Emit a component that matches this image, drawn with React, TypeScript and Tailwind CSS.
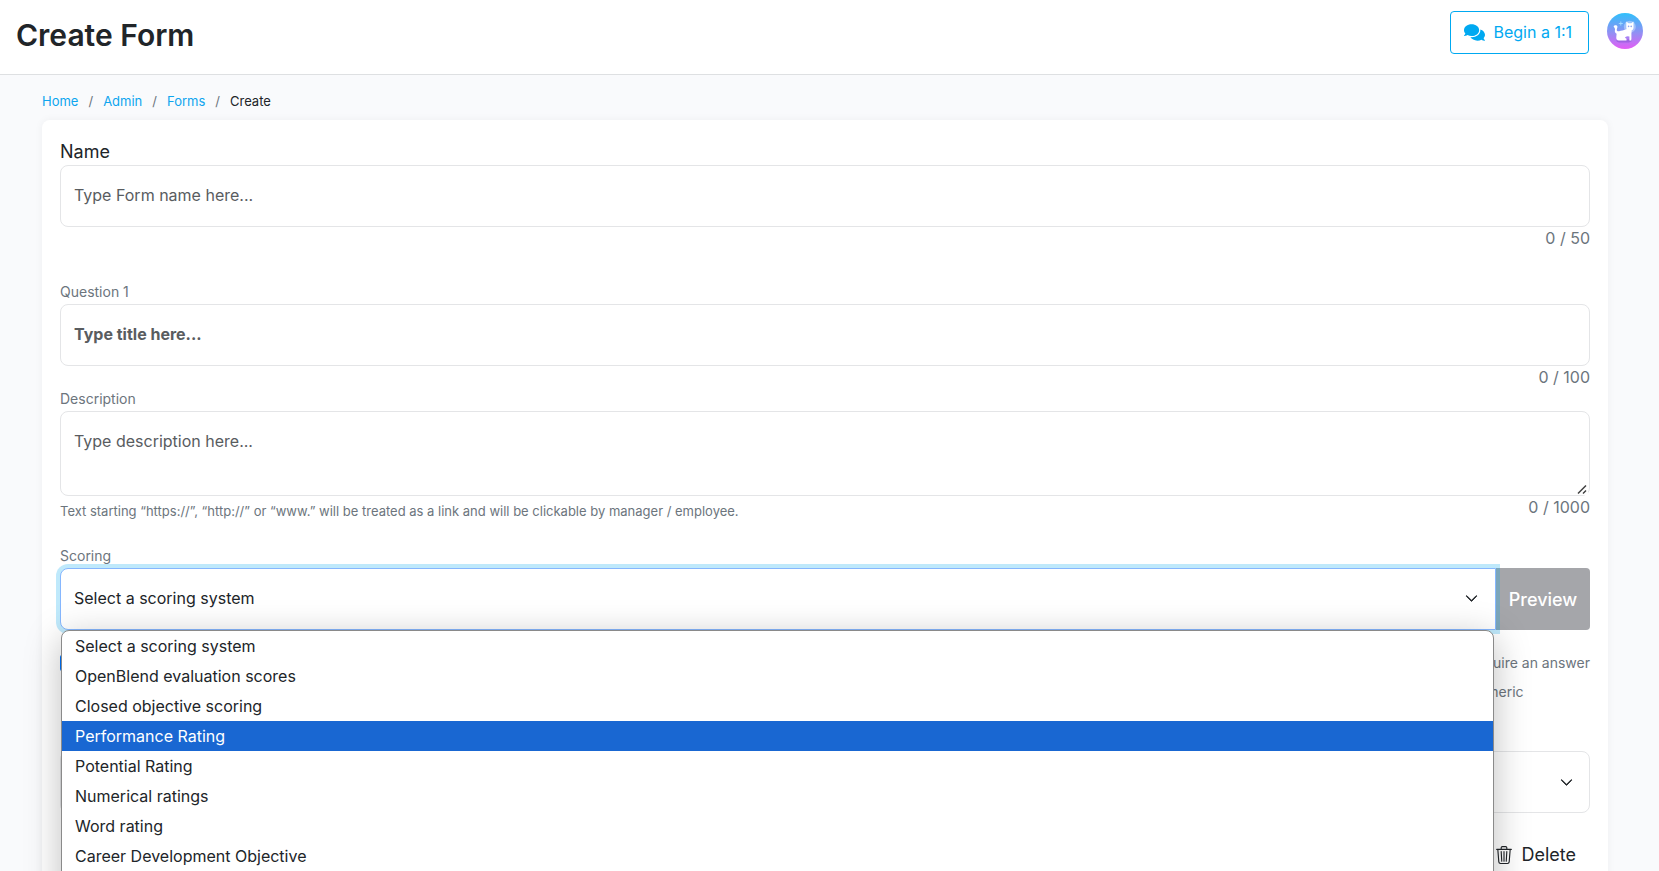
import { useState } from "react";
import { FaComments } from "react-icons/fa";
import { BsChevronDown, BsTrash3 } from "react-icons/bs";

const scoringOptions = [
  "Select a scoring system",
  "OpenBlend evaluation scores",
  "Closed objective scoring",
  "Performance Rating",
  "Potential Rating",
  "Numerical ratings",
  "Word rating",
  "Career Development Objective",
];

const crumbs = ["Home", "Admin", "Forms"];

const labelClass = "block pb-[2px] text-sm leading-[21px] text-[#6c757d]";
const fieldClass =
  "block w-full rounded-lg border border-[#e4e5e7] bg-white px-[13px] text-base text-[#212529] outline-none placeholder:text-[#595c5f]";
const counterClass = "text-right text-base leading-[22px] text-[#6c757d]";

const Avatar = () => (
  <svg viewBox="0 0 36 36" className="size-9" aria-hidden="true">
    <defs>
      <linearGradient id="avatar-bg" x1="0" y1="0" x2="0" y2="1">
        <stop offset="0" stopColor="#2fc0fb" />
        <stop offset="0.55" stopColor="#9190f3" />
        <stop offset="1" stopColor="#e35cf5" />
      </linearGradient>
    </defs>
    <circle cx="18" cy="18" r="18" fill="url(#avatar-bg)" />
    <path
      d="M9 27.5c1 2 3 2 5 2h8l3-1.500v-2z"
      fill="#6a45c0"
      opacity="0.35"
    />
    <circle cx="22.800" cy="13.800" r="6" fill="#c9dcff" opacity="0.55" />
    <path
      d="M6.600 13.200c.8-1.400 3.400-1.500 3.800.1.300 1.400-.9 2.700-.6 4 .2 1 1.300 1.300 2.400.9 2-.8 4.600-.6 6.300-1.700l1.500-.5 4.300.6c.7 1.500 0 3.400.1 5v5.900h-2v-4l-1.900-.3c-1.300.2-2 .8-2.600 1.500l1.600 1v1.800h-7.500c-2 0-3-1.200-2.700-3.200l.3-3.500c-1.700-1-2.100-2.400-1.600-4 .3-1.100-.8-2.300-1.400-3.600z"
      fill="#fff"
    />
    <path
      d="M19.300 8.500l2.200 1.700h2.800l2.200-1.700v6.300c0 2-1.600 3-3.600 3s-3.600-1-3.600-3z"
      fill="#fff"
    />
    <circle cx="21.600" cy="13.400" r="0.800" fill="#8fa5f0" />
    <circle cx="24.200" cy="13.400" r="0.800" fill="#8fa5f0" />
    <path d="M13.800 8.500v4M11.800 10.500h4" stroke="#a5dcff" strokeWidth="0.900" />
  </svg>
);

const Header = () => (
  <header className="flex h-[75px] items-start justify-between border-b border-[#dee0e2] bg-white px-4">
    <h1 className="pt-[11px] text-[30px] font-semibold leading-[48px]">
      Create Form
    </h1>
    <div className="flex items-start gap-[18px] pt-[11px]">
      <button
        type="button"
        className="flex h-[43px] items-center gap-2 rounded border border-[#00a9f1] pl-[13px] pr-4 pb-px text-base text-[#00a9f1]">
        <FaComments size={21} />
        Begin a 1:1
      </button>
      <button type="button" aria-label="Account" className="mt-[2px]">
        <Avatar />
      </button>
    </div>
  </header>
);

const App = () => {
  const [name, setName] = useState("");
  const [title, setTitle] = useState("");
  const [description, setDescription] = useState("");
  const [scoring, setScoring] = useState(scoringOptions[0]);
  const [active, setActive] = useState("Performance Rating");

  return (
    <div className="h-screen overflow-hidden bg-[#f9fafc] font-['Inter',sans-serif] text-[#212529]">
      <Header />
      <main className="pl-[42px] pr-[51px]">
        <nav aria-label="Breadcrumb" className="pt-4 pb-2">
          <ol className="flex text-[13px] leading-[21px]">
            {crumbs.map((crumb) => (
              <li key={crumb}>
                <a href="#" className="text-[#0ea5ef]">
                  {crumb}
                </a>
                <span className="px-[10px] text-[#6c757d]">/</span>
              </li>
            ))}
            <li aria-current="page">Create</li>
          </ol>
        </nav>

        <form className="rounded-lg bg-white px-[18px] pt-[18px] pb-10 shadow-[0_0_8px_rgba(0,0,0,0.05)]">
          <label htmlFor="name" className="block text-lg leading-[27px]">
            Name
          </label>
          <input
            id="name"
            type="text"
            value={name}
            onChange={(e) => setName(e.target.value)}
            placeholder="Type Form name here..."
            className={`${fieldClass} h-[62px] pb-[2px]`}
          />
          <p className={counterClass}>{name.length} / 50</p>

          <label htmlFor="title" className={`${labelClass} mt-8`}>
            Question 1
          </label>
          <input
            id="title"
            type="text"
            value={title}
            onChange={(e) => setTitle(e.target.value)}
            placeholder="Type title here..."
            className={`${fieldClass} h-[62px] pb-[2px] font-bold`}
          />
          <p className={counterClass}>{title.length} / 100</p>

          <label htmlFor="description" className={labelClass}>
            Description
          </label>
          <div className="relative">
            <textarea
              id="description"
              value={description}
              onChange={(e) => setDescription(e.target.value)}
              placeholder="Type description here..."
              className={`${fieldClass} h-[85px] resize-y py-[17px] leading-6`}
            />
            <svg
              viewBox="0 0 12 12"
              className="pointer-events-none absolute right-[2px] bottom-[1px] size-3 bg-white"
              aria-hidden="true">
              <path
                d="M2 10.500L10 2.500M7 10.500l3-3"
                stroke="#404040"
                strokeWidth="1.500"
              />
            </svg>
          </div>
          <div className="flex justify-between">
            <p className="pt-1 text-[13px] leading-[22px] text-[#6c757d]">
              Text starting “https://”, “http://” or “www.” will be treated as a
              link and will be clickable by manager / employee.
            </p>
            <p className={counterClass}>{description.length} / 1000</p>
          </div>

          <label htmlFor="scoring" className={`${labelClass} mt-[23px]`}>
            Scoring
          </label>
          <div className="relative flex">
            <div className="relative z-10 flex-1">
              <select
                id="scoring"
                value={scoring}
                onChange={(e) => setScoring(e.target.value)}
                className="h-[62px] w-full appearance-none rounded-l-lg border border-[#86b7fe] bg-white px-[13px] pb-[2px] text-base shadow-[0_0_0_4px_rgba(0,169,241,0.25)] outline-none">
                {scoringOptions.map((option) => (
                  <option key={option}>{option}</option>
                ))}
              </select>
              <BsChevronDown
                size={13}
                strokeWidth={1}
                className="pointer-events-none absolute right-[18px] top-[24px]"
              />
              <ul
                role="listbox"
                aria-label="Scoring"
                className="absolute left-px right-[2px] top-[62px] z-20 rounded-t-lg border border-[#8a8a8a] bg-white pb-8 shadow-[0_8px_36px_rgba(0,0,0,0.26)]">
                {scoringOptions.map((option) => (
                  <li
                    key={option}
                    role="option"
                    aria-selected={option === active}
                    onMouseEnter={() => setActive(option)}
                    onClick={() => setScoring(option)}
                    className={`px-[13px] text-base leading-[30px] ${
                      option === active ? "bg-[#1967d2] text-white" : ""
                    }`}>
                    {option}
                  </li>
                ))}
              </ul>
            </div>
            <button
              type="button"
              className="w-[94px] rounded-r bg-[#a5a6aa] pt-[2px] text-lg font-medium text-white">
              Preview
            </button>
          </div>

          <div className="mt-[18px] flex items-start justify-between">
            <input
              type="checkbox"
              aria-label="Scored question"
              defaultChecked
              className="mt-[7px] size-4"
            />
            <div className="text-sm leading-[29px] text-[#6c757d]">
              <label className="flex items-center gap-2">
                <input type="checkbox" className="size-4" />
                Require an answer
              </label>
              <label className="flex items-center gap-2">
                <input type="checkbox" className="size-4" />
                Numeric
              </label>
            </div>
          </div>

          <div className="relative mt-[45px]">
            <select
              aria-label="Answer type"
              className={`${fieldClass} h-[62px] appearance-none`}>
              <option></option>
            </select>
            <BsChevronDown
              size={13}
              strokeWidth={1}
              className="pointer-events-none absolute right-[17px] top-[25px]"
            />
          </div>

          <div className="mt-7 flex justify-end">
            <button
              type="button"
              className="flex items-center gap-2 px-[14px] text-lg leading-7">
              <BsTrash3 size={18} />
              Delete
            </button>
          </div>
        </form>
      </main>
    </div>
  );
};

export default App;
